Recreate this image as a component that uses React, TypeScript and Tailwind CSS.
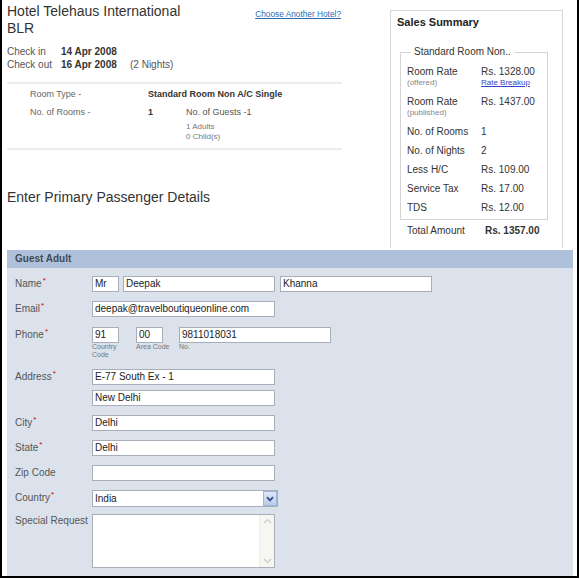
import React from "react";

const Req = () => (
  <span className="relative -top-[4px] ml-[1px] text-[8px] leading-none text-[#d40000]">*</span>
);

const Label = ({ text, req = false }: { text: string; req?: boolean }) => (
  <div className="w-[85px] shrink-0 pl-[8px] text-[10px] leading-[16px] text-[#555]">
    {text}
    {req && <Req />}
  </div>
);

const Field = ({ value = "", w }: { value?: string; w: string }) => (
  <div
    className={`${w} h-[16px] shrink-0 border border-[#a7aeb8] bg-white pl-[2px] text-[10px] leading-[14px] text-[#222] whitespace-nowrap overflow-hidden`}
  >
    {value}
  </div>
);

const SRow = ({ label, value, sub, link }: { label: string; value: string; sub?: string; link?: string }) => (
  <div>
    <div className="flex text-[10px] leading-[12px] text-[#333]">
      <div className="w-[74px]">{label}</div>
      <div>{value}</div>
    </div>
    {sub && (
      <div className="flex text-[8px] leading-[10px]">
        <div className="w-[74px] text-[#888]">{sub}</div>
        {link && <div className="text-[#3344cc] underline">{link}</div>}
      </div>
    )}
  </div>
);

const SimpleRow = ({ label, value }: { label: string; value: string }) => (
  <div className="flex text-[10px] leading-[19px] text-[#333]">
    <div className="w-[74px]">{label}</div>
    <div>{value}</div>
  </div>
);

export default function App() {
  return (
    <div className="w-[580px] h-[579px] bg-white font-['Liberation_Sans',Arial,sans-serif]">
      <div className="w-[579px] h-[578px] border-l-2 border-r-2 border-b-2 border-black pl-[5px] pr-[4px] flex flex-col">
        {/* Top section */}
        <div className="flex h-[248px] shrink-0">
          {/* Left column */}
          <div className="w-[335px] pt-[3px]">
            <div className="flex justify-between">
              <div className="text-[14px] leading-[17px] text-[#333]">
                Hotel Telehaus International
                <br />
                BLR
              </div>
              <a className="mt-[6px] mr-[1px] text-[8.3px] leading-[10px] text-[#2f6bb3] underline cursor-pointer">
                Choose Another Hotel?
              </a>
            </div>

            <div className="mt-[8px] grid grid-cols-[54px_69px_auto] text-[10px] leading-[13px]">
              <div className="text-[#555]">Check in</div>
              <div className="font-bold text-[#333]">14 Apr 2008</div>
              <div></div>
              <div className="text-[#555]">Check out</div>
              <div className="font-bold text-[#333]">16 Apr 2008</div>
              <div className="text-[#555]">(2 Nights)</div>
            </div>

            <div className="mt-[11px] border-t-2 border-[#ececec]"></div>

            <div className="pl-[23px] mt-[4px] text-[9px]">
              <div className="flex leading-[12px]">
                <div className="w-[118px] text-[#666]">Room Type -</div>
                <div className="font-bold text-[#333]">Standard Room Non A/C Single</div>
              </div>
              <div className="flex mt-[6px]">
                <div className="w-[118px] leading-[12px] text-[#666]">No. of Rooms -</div>
                <div className="w-[38px] leading-[12px] font-bold text-[#333]">1</div>
                <div>
                  <div className="leading-[12px] text-[#555]">No. of Guests -1</div>
                  <div className="mt-[4px] text-[8px] leading-[10px] text-[#777]">1 Adults</div>
                  <div className="text-[8px] leading-[10px] text-[#777]">0 Child(s)</div>
                </div>
              </div>
            </div>

            <div className="mt-[6px] border-t-2 border-[#ececec]"></div>

            <div className="mt-[39px] text-[14px] leading-[17px] text-[#333]">
              Enter Primary Passenger Details
            </div>
          </div>

          {/* Sales summary box */}
          <div className="ml-[48px] mt-[10px] w-[173px] h-[238px] border border-[#d6d6d6] border-b-0">
            <div className="pl-[6px] pt-[5px] text-[11px] leading-[13px] font-bold text-[#222]">
              Sales Summary
            </div>
            <fieldset className="ml-[9px] mt-[17px] w-[148px] border border-[#d4d4d4] pl-[6px] pb-[2px]">
              <legend className="ml-[4px] px-[3px] text-[10px] leading-[12px] text-[#333]">
                Standard Room Non..
              </legend>
              <div className="pt-[8px]">
                <SRow label="Room Rate" value="Rs. 1328.00" sub="(offered)" link="Rate Breakup" />
                <div className="mt-[8px]">
                  <SRow label="Room Rate" value="Rs. 1437.00" sub="(published)" />
                </div>
                <div className="mt-[4px]">
                  <SimpleRow label="No. of Rooms" value="1" />
                  <SimpleRow label="No. of Nights" value="2" />
                  <SimpleRow label="Less H/C" value="Rs. 109.00" />
                  <SimpleRow label="Service Tax" value="Rs. 17.00" />
                  <SimpleRow label="TDS" value="Rs. 12.00" />
                </div>
              </div>
            </fieldset>
            <div className="mt-[5px] pl-[16px] flex text-[10px] leading-[12px] text-[#333]">
              <div className="w-[78px]">Total Amount</div>
              <div className="font-bold">Rs. 1357.00</div>
            </div>
          </div>
        </div>

        {/* Guest Adult bar */}
        <div className="mt-[2px] h-[18px] shrink-0 bg-[#afc1da] pl-[8px] text-[10px] leading-[18px] font-bold text-[#3f4a57]">
          Guest Adult
        </div>

        {/* Form */}
        <div className="flex-1 bg-[#dbe2ec] pt-[8px]">
          <div className="flex items-start">
            <Label text="Name" req />
            <Field value="Mr" w="w-[27px]" />
            <div className="w-[4px]" />
            <Field value="Deepak" w="w-[152px]" />
            <div className="w-[5px]" />
            <Field value="Khanna" w="w-[152px]" />
          </div>

          <div className="flex items-start mt-[9px]">
            <Label text="Email" req />
            <Field value="deepak@travelboutiqueonline.com" w="w-[183px]" />
          </div>

          <div className="flex items-start mt-[10px]">
            <Label text="Phone" req />
            <div className="flex flex-col w-[44px]">
              <Field value="91" w="w-[27px]" />
              <div className="text-[7px] leading-[8px] text-[#777]">
                Country
                <br />
                Code
              </div>
            </div>
            <div className="flex flex-col w-[43px]">
              <Field value="00" w="w-[27px]" />
              <div className="text-[7px] leading-[8px] text-[#777]">Area Code</div>
            </div>
            <div className="flex flex-col">
              <Field value="9811018031" w="w-[152px]" />
              <div className="text-[7px] leading-[8px] text-[#777]">No.</div>
            </div>
          </div>

          <div className="flex items-start mt-[10px]">
            <Label text="Address" req />
            <div className="flex flex-col gap-[5px]">
              <Field value="E-77 South Ex - 1" w="w-[183px]" />
              <Field value="New Delhi" w="w-[183px]" />
            </div>
          </div>

          <div className="flex items-start mt-[9px]">
            <Label text="City" req />
            <Field value="Delhi" w="w-[183px]" />
          </div>

          <div className="flex items-start mt-[9px]">
            <Label text="State" req />
            <Field value="Delhi" w="w-[183px]" />
          </div>

          <div className="flex items-start mt-[9px]">
            <Label text="Zip Code" />
            <Field value="" w="w-[183px]" />
          </div>

          <div className="flex items-start mt-[9px]">
            <Label text="Country" req />
            <div className="w-[186px] h-[17px] border border-[#a7aeb8] bg-white flex items-center">
              <div className="flex-1 pl-[2px] text-[10px] leading-[15px] text-[#222]">India</div>
              <div className="w-[14px] h-[15px] border border-[#9fb5da] bg-gradient-to-b from-[#dfe8f7] to-[#b9cbea] flex items-center justify-center">
                <svg width="8" height="6" viewBox="0 0 8 6">
                  <path d="M1 1.2 L4 4.4 L7 1.2" fill="none" stroke="#304f86" strokeWidth="1.8" />
                </svg>
              </div>
            </div>
          </div>

          <div className="flex items-start mt-[7px]">
            <div className="w-[85px] shrink-0 pl-[8px] pt-[1px] text-[10px] leading-[12px] text-[#555]">
              Special Request
            </div>
            <div className="w-[183px] h-[54px] border border-[#a7aeb8] bg-white flex justify-end">
              <div className="w-[15px] h-full bg-[#f8f6f1] border-l border-[#eeebe3] flex flex-col justify-between items-center py-[3px]">
                <svg width="9" height="6" viewBox="0 0 9 6">
                  <path d="M1 5 L4.5 1.5 L8 5" fill="none" stroke="#c9c9c9" strokeWidth="1.2" />
                </svg>
                <svg width="9" height="6" viewBox="0 0 9 6">
                  <path d="M1 1 L4.5 4.5 L8 1" fill="none" stroke="#c9c9c9" strokeWidth="1.2" />
                </svg>
              </div>
            </div>
          </div>
        </div>
      </div>
    </div>
  );
}
